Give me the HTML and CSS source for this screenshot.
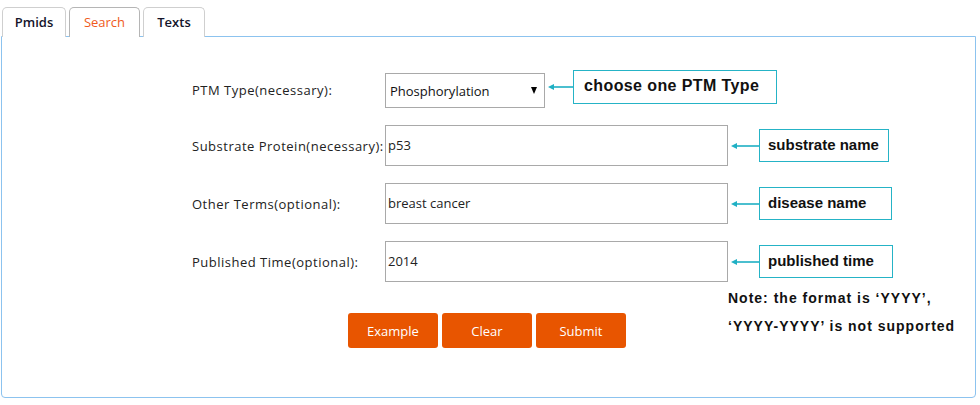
FILE: index.html
```html
<!DOCTYPE html>
<html>
<head>
<meta charset="utf-8">
<link rel="stylesheet" href="styles.css">
</head>
<body>
<div class="tabs">
  <div class="tab tab-pmids">Pmids</div>
  <div class="tab tab-active">Search</div>
  <div class="tab tab-texts">Texts</div>
</div>
<div class="panel">
  <div class="form">
    <div class="row row-first">
      <div class="label">PTM Type(necessary):</div>
      <div class="select"><span>Phosphorylation</span><span class="caret"></span></div>
      <div class="hint">
        <svg class="arrow arrow-short" width="28" height="10" viewBox="0 0 28 10"><line x1="7" y1="5" x2="28" y2="5" stroke="#1fb0c4" stroke-width="1.6"/><polygon points="3,5 9,2 9,8" fill="#1fb0c4"/></svg>
        <div class="callout callout-ptm">choose one PTM Type</div>
      </div>
    </div>
    <div class="row">
      <div class="label">Substrate Protein(necessary):</div>
      <div class="input">p53</div>
      <div class="hint">
        <svg class="arrow" width="31" height="10" viewBox="0 0 31 10"><line x1="7" y1="5" x2="31" y2="5" stroke="#1fb0c4" stroke-width="1.6"/><polygon points="3,5 9,2 9,8" fill="#1fb0c4"/></svg>
        <div class="callout callout-sub">substrate name</div>
      </div>
    </div>
    <div class="row">
      <div class="label">Other Terms(optional):</div>
      <div class="input">breast cancer</div>
      <div class="hint">
        <svg class="arrow" width="31" height="10" viewBox="0 0 31 10"><line x1="7" y1="5" x2="31" y2="5" stroke="#1fb0c4" stroke-width="1.6"/><polygon points="3,5 9,2 9,8" fill="#1fb0c4"/></svg>
        <div class="callout callout-dis">disease name</div>
      </div>
    </div>
    <div class="row">
      <div class="label">Published Time(optional):</div>
      <div class="input">2014</div>
      <div class="hint hint-last">
        <svg class="arrow" width="31" height="10" viewBox="0 0 31 10"><line x1="7" y1="5" x2="31" y2="5" stroke="#1fb0c4" stroke-width="1.6"/><polygon points="3,5 9,2 9,8" fill="#1fb0c4"/></svg>
        <div class="callout callout-pub">published time</div>
        <div class="note">Note: the format is ‘YYYY’,<br>‘YYYY-YYYY’ is not supported</div>
      </div>
    </div>
  </div>
  <div class="buttons">
    <button class="btn">Example</button>
    <button class="btn">Clear</button>
    <button class="btn">Submit</button>
  </div>
</div>
</body>
</html>
```
FILE: styles.css
```css
* { box-sizing: border-box; }
html, body { margin: 0; padding: 0; background: #fff; }
body {
  width: 980px;
  height: 405px;
  overflow: hidden;
  font-family: "Open Sans", "Liberation Sans", Arial, sans-serif;
  font-size: 13px;
  color: #222;
}
.tabs {
  display: flex;
  gap: 3px;
  padding: 7px 0 0 2px;
  height: 37px;
  position: relative;
  z-index: 1;
}
.tab {
  height: 30px;
  border: 1px solid #cfcfcf;
  border-bottom: none;
  border-radius: 5px 5px 0 0;
  line-height: 28px;
  text-align: center;
  font-size: 13px;
  font-weight: 600;
  color: #14142a;
  background: #fff;
}
.tab-pmids { width: 64px; }
.tab-texts { width: 62px; }
.tab-active {
  width: 71px;
  color: #ef5a1c;
  font-weight: normal;
  border-color: #b5b5b5;
}
.panel {
  margin: -1px 0 0 1px;
  width: 975px;
  height: 362px;
  border: 1px solid #8cc3ef;
  border-radius: 0 0 4px 4px;
}
.form {
  padding: 33px 0 0 190px;
  display: flex;
  flex-direction: column;
  gap: 17px;
}
.row {
  display: flex;
  align-items: center;
  height: 41px;
}
.row-first {
  align-items: flex-start;
  height: 38px;
}
.label {
  width: 193px;
  color: #222;
  letter-spacing: 0.5px;
  white-space: nowrap;
}
.row-first .label { margin-top: 11px; }
.select {
  width: 160px;
  height: 35px;
  margin-top: 3px;
  border: 1px solid #a9a9a9;
  display: flex;
  align-items: center;
  justify-content: space-between;
  padding: 0 7px 0 4px;
  color: #111;
}
.caret {
  width: 0;
  height: 0;
  border-left: 3.5px solid transparent;
  border-right: 3.5px solid transparent;
  border-top: 7px solid #000;
}
.input {
  width: 343px;
  height: 41px;
  border: 1px solid #a9a9a9;
  padding-left: 2px;
  line-height: 39px;
  color: #222;
}
.hint {
  display: flex;
  align-items: center;
  position: relative;
}
.arrow { display: block; }
.callout {
  border: 1.5px solid #25b3c6;
  background: #fff;
  height: 33px;
  line-height: 30px;
  padding-left: 8px;
  font-family: "Liberation Sans", Arial, sans-serif;
  font-size: 15px;
  font-weight: bold;
  color: #111;
  white-space: nowrap;
}
.callout-ptm {
  width: 204px;
  height: 34px;
  padding-left: 10px;
  font-size: 16px;
  letter-spacing: 0.4px;
}
.callout-sub { width: 130px; }
.callout-dis { width: 133px; }
.callout-pub { width: 134px; }
.note {
  position: absolute;
  left: 0;
  top: calc(100% + 6px);
  font-family: "Liberation Sans", Arial, sans-serif;
  font-size: 14px;
  font-weight: bold;
  letter-spacing: 1px;
  line-height: 28px;
  color: #111;
  white-space: nowrap;
}
.buttons {
  display: flex;
  justify-content: center;
  gap: 4px;
  margin-top: 31px;
  padding-right: 3px;
}
.btn {
  width: 90px;
  height: 35px;
  border: none;
  border-radius: 3px;
  background: #e85500;
  color: #fff;
  font-family: "Open Sans", "Liberation Sans", Arial, sans-serif;
  font-size: 13px;
}
```
